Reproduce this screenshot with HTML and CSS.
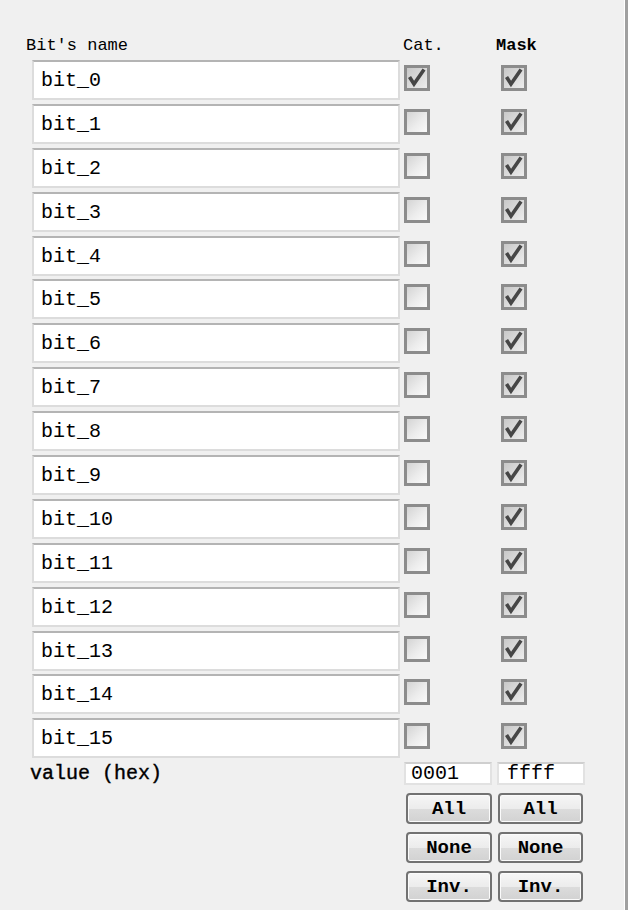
FILE: index.html
```html
<!DOCTYPE html>
<html>
<head>
<meta charset="utf-8">
<link rel="stylesheet" href="styles.css">
</head>
<body>
<div class="panel">
  <div class="header">
    <span class="h-name">Bit's name</span>
    <span class="h-cat">Cat.</span>
    <span class="h-mask">Mask</span>
  </div>
  <div class="rows">
    <div class="row"><div class="field">bit_0</div><span class="cb on cat"></span><span class="cb on"></span></div>
    <div class="row"><div class="field">bit_1</div><span class="cb cat"></span><span class="cb on"></span></div>
    <div class="row"><div class="field">bit_2</div><span class="cb cat"></span><span class="cb on"></span></div>
    <div class="row"><div class="field">bit_3</div><span class="cb cat"></span><span class="cb on"></span></div>
    <div class="row"><div class="field">bit_4</div><span class="cb cat"></span><span class="cb on"></span></div>
    <div class="row"><div class="field">bit_5</div><span class="cb cat"></span><span class="cb on"></span></div>
    <div class="row"><div class="field">bit_6</div><span class="cb cat"></span><span class="cb on"></span></div>
    <div class="row"><div class="field">bit_7</div><span class="cb cat"></span><span class="cb on"></span></div>
    <div class="row"><div class="field">bit_8</div><span class="cb cat"></span><span class="cb on"></span></div>
    <div class="row"><div class="field">bit_9</div><span class="cb cat"></span><span class="cb on"></span></div>
    <div class="row"><div class="field">bit_10</div><span class="cb cat"></span><span class="cb on"></span></div>
    <div class="row"><div class="field">bit_11</div><span class="cb cat"></span><span class="cb on"></span></div>
    <div class="row"><div class="field">bit_12</div><span class="cb cat"></span><span class="cb on"></span></div>
    <div class="row"><div class="field">bit_13</div><span class="cb cat"></span><span class="cb on"></span></div>
    <div class="row"><div class="field">bit_14</div><span class="cb cat"></span><span class="cb on"></span></div>
    <div class="row"><div class="field">bit_15</div><span class="cb cat"></span><span class="cb on"></span></div>
  </div>
  <div class="bottom">
    <div class="vlabel">value (hex)</div>
    <div class="controls">
      <div class="hex">0001</div>
      <div class="hex">ffff</div>
      <button class="btn">All</button>
      <button class="btn">All</button>
      <button class="btn">None</button>
      <button class="btn">None</button>
      <button class="btn">Inv.</button>
      <button class="btn">Inv.</button>
    </div>
  </div>
</div>
</body>
</html>
```
FILE: styles.css
```css
html, body {
  margin: 0;
  padding: 0;
  background: #f0f0f0;
}
.panel {
  box-sizing: border-box;
  width: 628px;
  height: 910px;
  background: #f0f0f0;
  border-right: 3px solid #a0a0a0;
  box-shadow: inset -1px 0 0 #ffffff;
  padding-top: 35px;
  font-family: "Liberation Mono", "DejaVu Sans Mono", monospace;
  color: #000;
}
.header {
  height: 21px;
  margin-bottom: 4px;
  display: flex;
  align-items: center;
  font-size: 17px;
  line-height: 20px;
}
.h-name {
  margin-left: 26px;
  width: 377px;
}
.h-cat {
  width: 93px;
}
.h-mask {
  font-weight: bold;
}
.rows {
  display: flex;
  flex-direction: column;
  gap: 3.9px;
}
.row {
  height: 40px;
  display: flex;
  align-items: flex-start;
}
.field {
  box-sizing: border-box;
  margin-left: 32px;
  width: 368px;
  height: 40px;
  background: #fff;
  border: 2px solid #dcdcdc;
  border-top-color: #b4b4b4;
  padding-left: 7px;
  font-size: 20px;
  line-height: 38px;
}
.cb {
  box-sizing: border-box;
  width: 26px;
  height: 26px;
  margin-top: 5px;
  margin-left: 4px;
  border: 3px solid #8c8c8c;
  background: linear-gradient(135deg, #d4d4d4 0%, #ececec 55%, #fafafa 100%);
  position: relative;
}
.cb.cat {
  margin-right: 67px;
}
.cb.on {
  background: linear-gradient(135deg, #c8c8c8 0%, #dcdcdc 55%, #ededed 100%);
}
.cb.on::after {
  content: "";
  position: absolute;
  left: 0;
  top: 0;
  width: 20px;
  height: 20px;
  background: url("data:image/svg+xml;utf8,<svg xmlns='http://www.w3.org/2000/svg' width='20' height='20' viewBox='0 0 20 20'><path d='M3.5 10.5 L7 16 L16 3' fill='none' stroke='%23464646' stroke-width='3.6' stroke-linejoin='miter' stroke-linecap='square'/></svg>") no-repeat;
}
.bottom {
  display: flex;
  margin-top: 4px;
}
.vlabel {
  width: 374px;
  padding-left: 30px;
  font-size: 20px;
  line-height: 24px;
  -webkit-text-stroke: 0.4px #000;
}
.controls {
  display: grid;
  grid-template-columns: 88px 88px;
  column-gap: 5px;
  grid-template-rows: 23px 31px 31px 31px;
  row-gap: 8px;
}
.hex {
  box-sizing: border-box;
  height: 23px;
  background: #fff;
  border: 2px solid #e2e2e2;
  border-top-color: #cfcfcf;
  font-family: "Liberation Mono", monospace;
  font-size: 20px;
  line-height: 20px;
  padding-left: 5px;
}
.hex + .hex {
  padding-left: 8px;
}
.btn {
  box-sizing: border-box;
  width: 86px;
  height: 31px;
  margin: 0 0 0 2px;
  padding: 0;
  border: 2px solid #727272;
  border-radius: 4px;
  background: linear-gradient(#f6f6f6 0%, #ececec 50%, #dcdcdc 51%, #d2d2d2 100%);
  box-shadow: inset 0 0 0 1px #fbfbfb;
  font-family: "Liberation Mono", monospace;
  font-size: 19px;
  font-weight: bold;
  color: #000;
}
.btn:nth-child(even) {
  margin-left: 1px;
  width: 85px;
}
```
